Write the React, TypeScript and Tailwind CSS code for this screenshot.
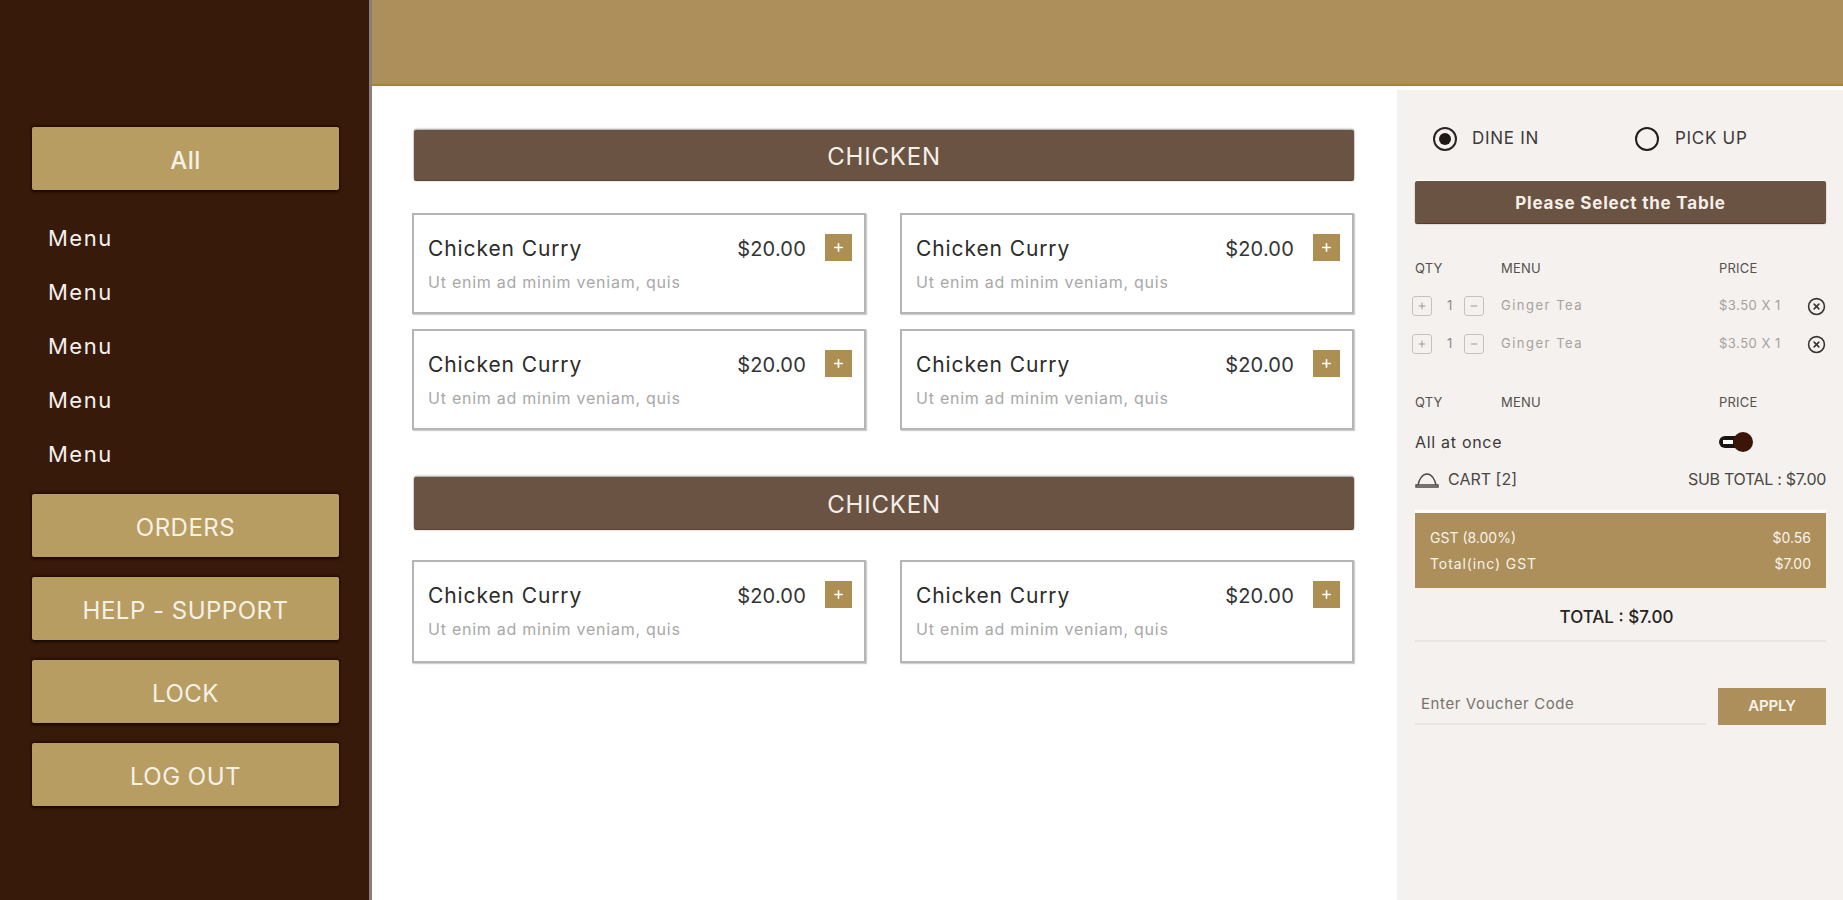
import { CircleX, Minus, Plus } from "lucide-react";

const font = { fontFamily: '"Inter", "Liberation Sans", sans-serif' };

function SideButton({ label, className = "pt-[4px]" }: { label: string; className?: string }) {
  return (
    <button className={`flex h-[63px] w-[307px] items-center justify-center rounded-[2px] bg-[#b89d63] text-[24px] tracking-[0.5px] text-[#f6f1e6] shadow-[0_-1px_3px_#1c0800,0_2px_3px_#1c0800] ${className}`}>
      {label}
    </button>
  );
}

function SectionBar({ className = "h-[50px]" }: { className?: string }) {
  return (
    <div className={`ml-[2px] flex items-center justify-center rounded-[2px] bg-[#6b5343] pt-[3px] text-[24px] tracking-[0.8px] text-[#f4efe9] shadow-[0_-1px_2px_#9a9a9a,0_1px_1px_#4b2a10] ${className}`}>
      CHICKEN
    </div>
  );
}

function MenuCard({ className = "h-[101px]" }: { className?: string }) {
  return (
    <div className={`border-2 border-[#b5b5b5] bg-white pl-[14px] pr-[12px] pt-[18px] shadow-[1px_1px_1px_#d0d0d0] ${className}`}>
      <div className="flex items-center">
        <span className="flex-1 text-[21px] tracking-[0.9px] text-[#2b2b2b]">Chicken Curry</span>
        <span className="mr-[19px] text-[20px] tracking-[0.2px] text-[#333333]">$20.00</span>
        <span className="-mt-[2px] flex h-[27px] w-[27px] items-center justify-center bg-[#ad8e53] text-white">
          <Plus size={13} strokeWidth={3} />
        </span>
      </div>
      <p className="mt-[5px] text-[16px] tracking-[0.75px] text-[#a8a8a8]">Ut enim ad minim veniam, quis</p>
    </div>
  );
}

function QtyRow() {
  return (
    <div className="mt-[17px] flex h-[21px] items-center text-[13px] text-[#a5a29f]">
      <span className="-ml-[3px] flex h-[20px] w-[20px] items-center justify-center rounded-[3px] border border-[#c4c1be] text-[#8c8986]">
        <Plus size={10} />
      </span>
      <span className="ml-[15px] w-[17px] text-[#8c8986]">1</span>
      <span className="flex h-[20px] w-[20px] items-center justify-center rounded-[3px] border border-[#c4c1be] text-[#8c8986]">
        <Minus size={10} />
      </span>
      <span className="ml-[17px] w-[218px] tracking-[1.5px]">Ginger Tea</span>
      <span className="flex-1 tracking-[0.5px]">$3.50 X 1</span>
      <CircleX size={19} className="text-[#3a3532]" />
    </div>
  );
}

function TableHead() {
  return (
    <div className="flex text-[13px] tracking-[0.2px] text-[#55524f]">
      <span className="w-[86px]">QTY</span>
      <span className="w-[218px]">MENU</span>
      <span>PRICE</span>
    </div>
  );
}

export default function App() {
  return (
    <div style={font} className="flex h-[900px] w-[1843px] overflow-hidden bg-white">
      <aside className="flex w-[372px] shrink-0 flex-col border-r-[3px] border-[#8a7f78] bg-[#371a09] pl-[32px] pt-[127px]">
        <SideButton label="All" className="pt-[4px] font-medium" />
        <nav className="mt-[21px] flex flex-col pl-[16px] text-[22px] tracking-[1.5px] text-[#f5f0ec]">
          <span className="h-[54px] leading-[54px]">Menu</span>
          <span className="h-[54px] leading-[54px]">Menu</span>
          <span className="h-[54px] leading-[54px]">Menu</span>
          <span className="h-[54px] leading-[54px]">Menu</span>
          <span className="h-[54px] leading-[54px]">Menu</span>
        </nav>
        <div className="mt-[13px] flex flex-col gap-[20px]">
          <SideButton label="ORDERS" />
          <SideButton label="HELP - SUPPORT" />
          <SideButton label="LOCK" />
          <SideButton label="LOG OUT" />
        </div>
      </aside>

      <div className="flex min-w-0 flex-1 flex-col">
        <header className="h-[86px] border-b-2 border-[#a98334] bg-[#ad8f5c]" />
        <div className="flex flex-1">
          <main className="w-[1025px] pl-[40px] pr-[43px] pt-[44px]">
            <SectionBar />
            <div className="mt-[33px] grid grid-cols-2 gap-x-[34px] gap-y-[15px]">
              <MenuCard />
              <MenuCard />
              <MenuCard />
              <MenuCard />
            </div>
            <div className="mt-[47px]">
              <SectionBar className="h-[52px]" />
            </div>
            <div className="mt-[31px] grid grid-cols-2 gap-x-[34px]">
              <MenuCard className="h-[103px]" />
              <MenuCard className="h-[103px]" />
            </div>
          </main>

          <section className="mt-[4px] flex-1 bg-[#f4f1ee] pl-[18px] pr-[17px]">
            <div className="flex h-[91px] items-center pt-[7px] text-[17px] tracking-[0.7px] text-[#3d3a38]">
              <span className="ml-[18px] flex h-[24px] w-[24px] items-center justify-center rounded-full border-2 border-[#2b2522]">
                <span className="h-[12px] w-[12px] rounded-full bg-[#1f1815]" />
              </span>
              <span className="ml-[15px] w-[163px]">DINE IN</span>
              <span className="h-[24px] w-[24px] rounded-full border-2 border-[#1f1f1f]" />
              <span className="ml-[16px]">PICK UP</span>
            </div>
            <div className="flex h-[42px] items-center justify-center rounded-[2px] bg-[#6b5343] pt-[3px] text-[17px] font-bold tracking-[0.8px] text-[#f4efe9] shadow-[0_-1px_1px_#fff,0_1px_1px_#4b2a10]">
              Please Select the Table
            </div>
            <div className="mt-[36px]">
              <TableHead />
            </div>
            <QtyRow />
            <QtyRow />
            <div className="mt-[38px]">
              <TableHead />
            </div>
            <div className="mt-[20px] flex h-[20px] items-center text-[16px] tracking-[0.7px] text-[#3d3a38]">
              <span className="w-[304px]">All at once</span>
              <span className="relative flex h-[12px] w-[28px] items-center rounded-full bg-[#1a1512] pl-[4px]">
                <span className="h-[4px] w-[10px] bg-white" />
                <span className="absolute -top-[4px] right-[-6px] h-[20px] w-[20px] rounded-full bg-[#3a1508]" />
              </span>
            </div>
            <div className="mt-[17px] flex h-[20px] items-center text-[16px] text-[#4a4744]">
              <svg width="24" height="18" viewBox="0 0 24 18" fill="none" stroke="#4a4744" strokeWidth="1.4" className="mr-[9px]">
                <path d="M1 15h22v2H1z" />
                <path d="M3 15c1-5 4-11 9-11s8 6 9 11" />
              </svg>
              <span className="flex-1">CART [2]</span>
              <span className="tracking-[-0.3px]">SUB TOTAL : $7.00</span>
            </div>
            <div className="mt-[22px] flex h-[77px] flex-col justify-center gap-[5px] border-t-2 border-white bg-[#ad8f5c] px-[15px] text-[14px] text-[#f8f3ea] shadow-[0_-1px_1px_#fff]">
              <div className="flex justify-between">
                <span>GST (8.00%)</span>
                <span>$0.56</span>
              </div>
              <div className="flex justify-between">
                <span className="tracking-[0.9px]">Total(inc) GST</span>
                <span>$7.00</span>
              </div>
            </div>
            <div className="mt-[17px] border-b-2 border-[#e8e5e2] pb-[9px] pr-[8px] text-center text-[17px] font-medium text-[#262321]">
              TOTAL : $7.00
            </div>
            <div className="mt-[46px] flex items-end justify-between">
              <div className="w-[291px] border-b-2 border-[#e8e5e2] pb-[7px] pl-[6px] text-[15px] tracking-[0.6px] text-[#77736f]">
                Enter Voucher Code
              </div>
              <button className="flex h-[37px] w-[108px] items-center justify-center bg-[#ad8f5c] text-[15px] font-semibold tracking-[-0.2px] text-[#f8f3ea]">
                APPLY
              </button>
            </div>
          </section>
        </div>
      </div>
    </div>
  );
}
